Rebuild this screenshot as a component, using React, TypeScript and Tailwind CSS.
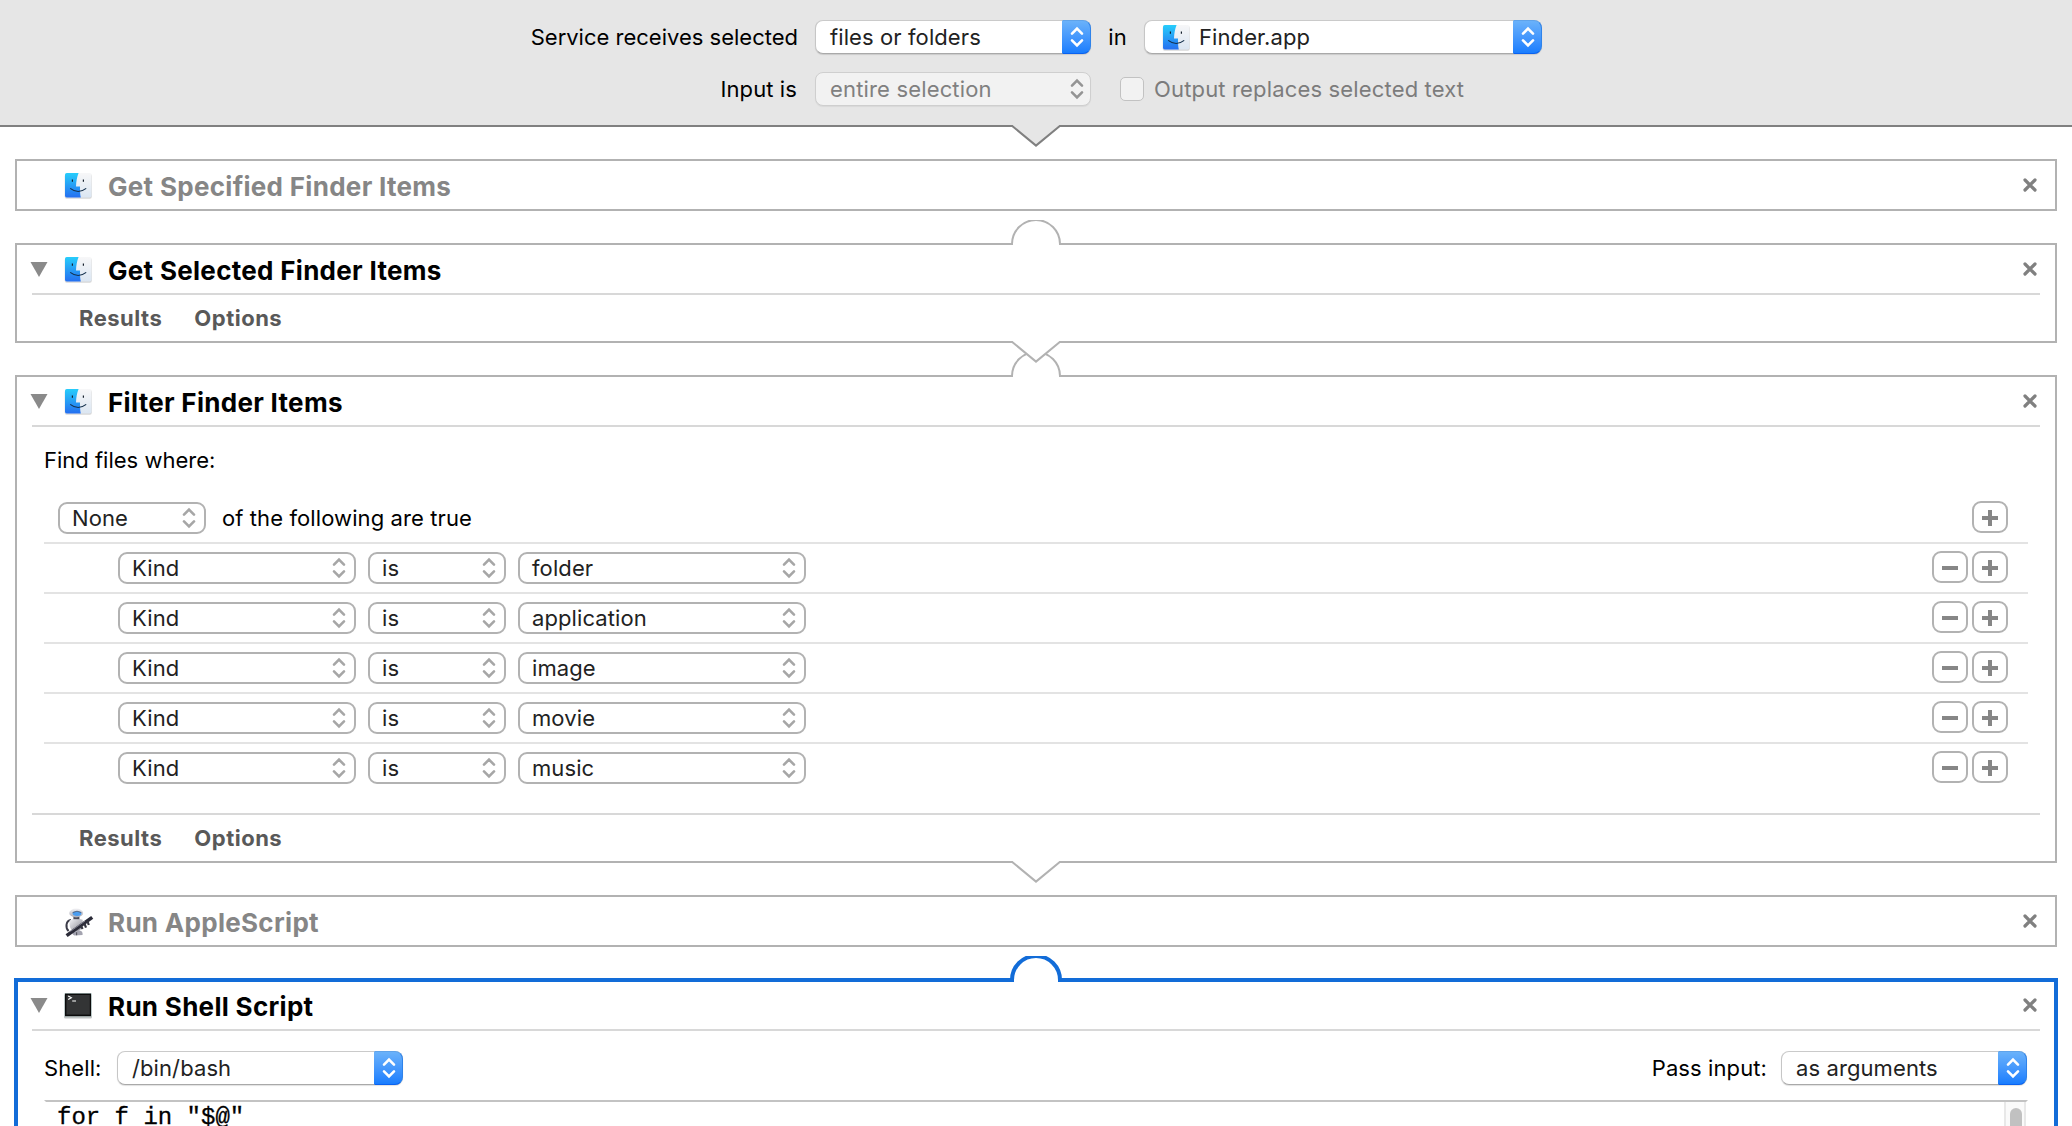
import React, { ReactNode } from "react";
import clsx from "clsx";

function FinderIcon() {
  return (
    <svg width="30" height="30" viewBox="-1 -1 30 30" className="block shrink-0">
      <defs>
        <linearGradient id="finder-blue" x1="0" y1="0" x2="0" y2="1">
          <stop offset="0" stopColor="#27cdfb" />
          <stop offset="1" stopColor="#256ff0" />
        </linearGradient>
        <linearGradient id="finder-white" x1="0" y1="0" x2="0" y2="1">
          <stop offset="0" stopColor="#f7f7f8" />
          <stop offset="1" stopColor="#dbe6f2" />
        </linearGradient>
      </defs>
      <rect x="-0.3" y="1" width="27.1" height="24.8" rx="2" fill="#000" opacity="0.16" />
      <rect x="0" y="0" width="26.5" height="24.5" rx="1.8" fill="url(#finder-white)" />
      <path d="M1.8 0H13.6C12 4 11.2 8.5 11 13.4H15C14.9 17 15.1 21 15.8 24.5H1.8Q0 24.5 0 22.7V1.8Q0 0 1.8 0Z" fill="url(#finder-blue)" />
      <path d="M7.4 6.6V8.8M18.4 6.6V8.8" stroke="#16202c" strokeWidth="1.2" />
      <path d="M5.2 15.4Q13.2 21.6 21.2 15.4" fill="none" stroke="#14304c" strokeWidth="1.2" />
    </svg>
  );
}

function AutomatorIcon() {
  return (
    <svg width="30" height="30" viewBox="0 0 30 30" className="block shrink-0">
      <defs>
        <linearGradient id="robot-body" x1="0" y1="0" x2="1" y2="1">
          <stop offset="0" stopColor="#f6f6fa" />
          <stop offset="1" stopColor="#85858f" />
        </linearGradient>
        <linearGradient id="robot-head" x1="0" y1="0" x2="0" y2="1">
          <stop offset="0" stopColor="#f2f2f5" />
          <stop offset="1" stopColor="#a9a9b4" />
        </linearGradient>
      </defs>
      <path d="M7 12C2 12.5 1 19.5 4.6 23" fill="none" stroke="#3b3b48" strokeWidth="2" />
      <path d="M5.6 12.6Q11 8.6 18.6 11.8L19 17Q17 24.5 9 23.5Q4.6 20 5.6 12.6Z" fill="url(#robot-body)" />
      <path d="M9 24Q7 26 10.5 27.4L18.6 27Q19 23 15.5 22.6Z" fill="#a4a4b0" />
      <path d="M12.6 24.2V27.2" stroke="#55555f" strokeWidth="1.1" />
      <path d="M9.4 8.2H15.4V11.2H9.4Z" fill="#4a4a58" />
      <ellipse cx="12.2" cy="5" rx="7" ry="4.4" fill="url(#robot-head)" />
      <ellipse cx="13" cy="5.6" rx="4.4" ry="2.3" fill="#4a9df0" />
      <path d="M8.6 4.6Q13 1.8 17.4 4.6" fill="none" stroke="#4a5468" strokeWidth="0.8" />
      <path d="M2.6 27.6L28.2 9.4" stroke="#2b2b38" strokeWidth="3.6" />
      <path d="M6.4 23.4L21 13" stroke="#8a8a98" strokeWidth="0.9" />
      <path d="M20.4 15.4L22 19.6M23.4 13L24.8 17M17 18L18.6 21" stroke="#34343f" strokeWidth="2.2" />
    </svg>
  );
}

function TerminalIcon() {
  return (
    <svg width="30" height="30" viewBox="0 0 30 30" className="block shrink-0">
      <rect x="0" y="2" width="28" height="24.5" rx="1.5" fill="#8c9494" opacity="0.55" />
      <rect x="0.5" y="1" width="27.2" height="23.6" rx="0.8" fill="#b9cbcb" />
      <rect x="1" y="1.6" width="26" height="22.6" fill="#0c0c0c" />
      <rect x="2.4" y="3" width="23.4" height="19.6" fill="#333435" />
      <path d="M4.2 4L7.4 5.8L4.2 7.6M8.2 9H12" fill="none" stroke="#fff" strokeWidth="1.1" />
    </svg>
  );
}

function Chevrons({ className }: { className?: string }) {
  return (
    <svg width="16" height="22" viewBox="0 0 16 22" fill="none" stroke="currentColor" strokeWidth="2.6" strokeLinecap="round" strokeLinejoin="miter" className={clsx("block shrink-0", className)}>
      <path d="M3 7.6L8 2.6L13 7.6M3 14.4L8 19.4L13 14.4" />
    </svg>
  );
}

/** Pop-up button with the blue arrow cap. */
function Popup({ className, children }: { className: string; children: ReactNode }) {
  return (
    <div className={clsx("flex h-[34px] rounded-[8px] border border-t-[#cacaca] border-x-[#c6c6c6] border-b-[#a9a9a9] bg-white shadow-[0_1px_1px_rgba(0,0,0,0.12)]", className)}>
      <div className="flex min-w-0 flex-1 items-center pl-[14px] text-[#222]">{children}</div>
      <div className="-my-px -mr-px flex w-[29px] items-center justify-center rounded-r-[8px] border border-t-[#5fa3ea] border-r-[#2f83ea] border-b-[#0a62f0] border-l-transparent bg-linear-to-b from-[#6cb3fa] to-[#147bfe] bg-origin-border text-white">
        <Chevrons />
      </div>
    </div>
  );
}

/** Outlined pop-up used in the filter rows. */
function Outlined({ className, children }: { className: string; children: ReactNode }) {
  return (
    <div className={clsx("flex h-8 items-center justify-between rounded-[9px] border-2 border-[#b2b2b2] bg-white pr-[7px] pl-[12px] text-[#222]", className)}>
      <span>{children}</span>
      <Chevrons className="text-[#a6a6a6]" />
    </div>
  );
}

function SquareButton({ kind }: { kind: "plus" | "minus" }) {
  return (
    <div className="flex h-8 w-9 items-center justify-center rounded-[9px] border-2 border-[#b2b2b2] bg-white pt-[2px]">
      <svg width="16" height="16" viewBox="0 0 16 16" stroke="#868686" strokeWidth="4">
        <path d={kind === "plus" ? "M0 8H16M8 0V16" : "M0 8H16"} />
      </svg>
    </div>
  );
}

function Footer() {
  return (
    <div className="flex h-[46px] items-center gap-[32px] pl-[62px] text-[22px] font-bold tracking-[0.5px] text-[#595959]">
      <span>Results</span>
      <span>Options</span>
    </div>
  );
}

const Divider = () => <div className="mx-[15px] h-[2px] bg-[#d8d8d8]" />;

interface CardProps {
  title: string;
  icon: ReactNode;
  disabled?: boolean;
  selected?: boolean;
  inlet?: boolean;
  outlet?: boolean;
  children?: ReactNode;
}

function Card({ title, icon, disabled, selected, inlet, outlet, children }: CardProps) {
  return (
    <section className={clsx("relative bg-white", selected ? "-mx-px -mt-px border-4 border-[#126cd8]" : "border-2 border-[#b2b2b2]")}>
      {inlet && !selected && (
        <svg width="50" height="25" viewBox="0 0 50 25" className="absolute -top-[25px] left-[994px]">
          <path d="M1 25V24A24 24 0 0 1 49 24V25Z" fill="#fff" />
          <path d="M1 25V24A24 24 0 0 1 49 24V25" fill="none" stroke="#b2b2b2" strokeWidth="2" />
        </svg>
      )}
      {inlet && selected && (
        <svg width="52" height="26" viewBox="0 0 52 26" className="absolute -top-[26px] left-[992px]">
          <path d="M2 26V24A24 24 0 0 1 50 24V26" fill="#fff" stroke="#126cd8" strokeWidth="4" />
        </svg>
      )}
      {outlet && (
        <svg width="50" height="24" viewBox="0 0 50 24" className="absolute -bottom-[24px] left-[994px] z-10">
          <path d="M1.4 0H48.6V2L25 21.2L1.4 2Z" fill="#fff" />
          <path d="M0 1H1.2L25 20.6L48.8 1H50" fill="none" stroke="#b2b2b2" strokeWidth="2" />
        </svg>
      )}
      <div className={clsx(selected && "-m-px")}>
        <header className="flex h-12 items-center">
          <span className="w-[47px] pl-[13px]">
            {!disabled && (
              <svg width="18" height="15" viewBox="0 0 18 15" className="block">
                <path d="M0.5 0H17.5L9 15Z" fill="#8a8a8a" />
              </svg>
            )}
          </span>
          <span className="mt-[3px] w-[44px]">{icon}</span>
          <h2 className={clsx("mt-[3px] flex-1 text-[26px] font-bold tracking-[0.3px]", disabled ? "text-[#868686]" : "text-black")}>{title}</h2>
          <svg width="18" height="18" viewBox="0 0 18 18" className="mr-[16px]">
            <path d="M4 4L14 14M14 4L4 14" stroke="#808080" strokeWidth="3.2" strokeLinecap="round" />
          </svg>
        </header>
        {!disabled && <Divider />}
        {children}
      </div>
    </section>
  );
}

const kinds = ["folder", "application", "image", "movie", "music"];

export default function App() {
  return (
    <div className="h-[1126px] w-[2072px] overflow-hidden bg-white font-[Inter,sans-serif] text-[22px] leading-[30px] tracking-[0.1px] whitespace-nowrap text-black">
      <div className="relative h-[127px] border-b-2 border-[#808080] bg-[#e6e6e6] pt-[20px]">
        <div className="flex items-center">
          <span className="w-[798px] text-right tracking-normal">Service receives selected</span>
          <Popup className="ml-[17px] w-[276px]">files or folders</Popup>
          <span className="w-[53px] text-center">in</span>
          <Popup className="w-[398px]">
            <span className="mt-[3px] mr-[7px] ml-[3px]">
              <FinderIcon />
            </span>
            Finder.app
          </Popup>
        </div>
        <div className="mt-[18px] flex items-center">
          <span className="w-[797px] text-right">Input is</span>
          <div className="ml-[18px] flex h-[34px] w-[276px] items-center justify-between rounded-[8px] border border-[#cfcfcf] bg-[#f2f2f2] pr-[5px] pl-[14px] tracking-[0.16px] text-[#808080] shadow-[0_1px_1px_rgba(0,0,0,0.06)]">
            entire selection
            <Chevrons className="text-[#949494]" />
          </div>
          <div className="ml-[29px] size-6 rounded-[5px] border border-[#c2c2c2] bg-[#f2f2f2]" />
          <span className="ml-[10px] tracking-[0.16px] text-[#7c7c7c]">Output replaces selected text</span>
        </div>
        <svg width="50" height="24" viewBox="0 0 50 24" className="absolute -bottom-[24px] left-[1011px]">
          <path d="M1.4 0H48.6V2L25 21.2L1.4 2Z" fill="#e6e6e6" />
          <path d="M0 1H1.2L25 20.6L48.8 1H50" fill="none" stroke="#808080" strokeWidth="2" />
        </svg>
      </div>

      <main className="flex flex-col gap-8 px-[15px] pt-8">
        <Card title="Get Specified Finder Items" icon={<FinderIcon />} disabled />

        <Card title="Get Selected Finder Items" icon={<FinderIcon />} inlet outlet>
          <Footer />
        </Card>

        <Card title="Filter Finder Items" icon={<FinderIcon />} inlet outlet>
          <div className="h-[386px] px-[27px] pt-[18px]">
            <p className="tracking-normal">Find files where:</p>
            <div className="mt-[17px] flex h-[50px] items-center pr-[20px] pl-[14px] pt-[2px]">
              <Outlined className="w-[148px]">None</Outlined>
              <span className="ml-[16px] flex-1">of the following are true</span>
              <div className="-mt-[2px]">
                <SquareButton kind="plus" />
              </div>
            </div>
            {kinds.map((kind) => (
              <div key={kind} className="flex h-[50px] items-center border-t-2 border-[#e3e3e3] pr-[20px] pl-[74px]">
                <Outlined className="w-[238px]">Kind</Outlined>
                <Outlined className="ml-3 w-[138px]">is</Outlined>
                <Outlined className="ml-3 w-[288px]">{kind}</Outlined>
                <div className="-mt-[2px] ml-auto flex gap-1">
                  <SquareButton kind="minus" />
                  <SquareButton kind="plus" />
                </div>
              </div>
            ))}
          </div>
          <Divider />
          <Footer />
        </Card>

        <Card title="Run AppleScript" icon={<AutomatorIcon />} disabled />

        <Card title="Run Shell Script" icon={<TerminalIcon />} inlet selected>
          <div className="px-[27px] pt-5">
            <div className="flex items-center pr-px">
              <span className="w-[73px]">Shell:</span>
              <Popup className="w-[286px]">/bin/bash</Popup>
              <span className="ml-auto">Pass input:</span>
              <Popup className="ml-[14px] w-[246px]">as arguments</Popup>
            </div>
            <div className="mt-[15px] flex h-20 justify-between border-2 border-t-[#c3c3c3] border-x-transparent">
              <pre className="mt-2 pl-[11px] font-['Liberation_Mono',monospace] text-[24px] leading-4 tracking-normal [-webkit-text-stroke:0.3px_black]">for f in "$@"</pre>
              <div className="w-[22px] border-x-2 border-[#e8e8e8] bg-[#fafafa] pt-[6px] pl-[4px]">
                <div className="h-20 w-3 rounded-full bg-[#c1c1c1]" />
              </div>
            </div>
          </div>
        </Card>
      </main>
    </div>
  );
}
